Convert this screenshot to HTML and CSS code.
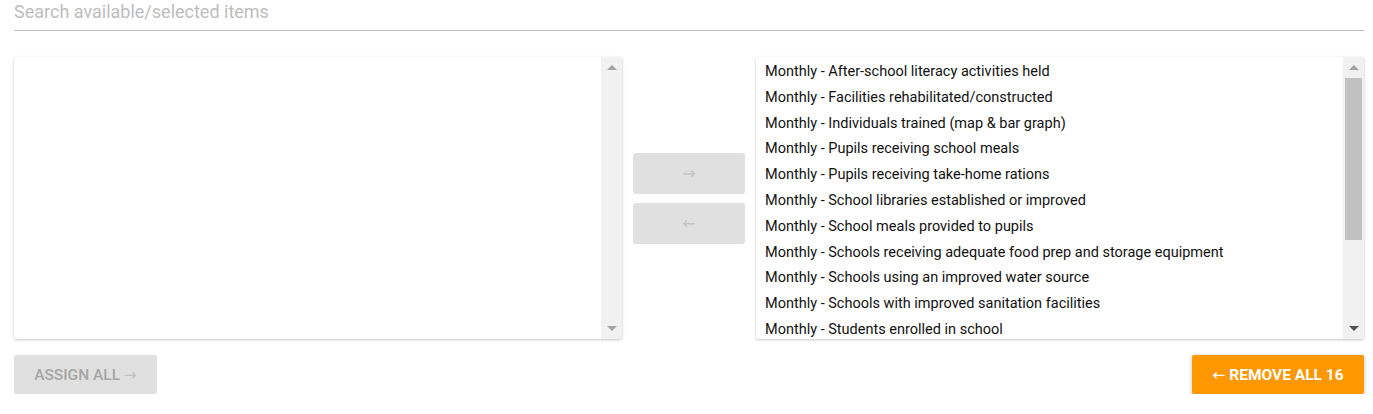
FILE: index.html
```html
<!DOCTYPE html>
<html>
<head>
<meta charset="utf-8">
<link rel="stylesheet" href="styles.css">
</head>
<body>
<div class="transfer">
  <div class="search">
    <input class="search-input" type="text" placeholder="Search available/selected items">
  </div>
  <div class="lists">
    <div class="listbox">
      <div class="items"></div>
      <div class="scrollbar">
        <div class="sb-btn"><span class="tri up"></span></div>
        <div class="sb-track"></div>
        <div class="sb-btn"><span class="tri down"></span></div>
      </div>
    </div>
    <div class="mid">
      <button class="move-btn"><span class="arrow">&rarr;</span></button>
      <button class="move-btn"><span class="arrow">&larr;</span></button>
    </div>
    <div class="listbox">
      <div class="items">
        <div class="item">Monthly - After-school literacy activities held</div>
        <div class="item">Monthly - Facilities rehabilitated/constructed</div>
        <div class="item">Monthly - Individuals trained (map &amp; bar graph)</div>
        <div class="item">Monthly - Pupils receiving school meals</div>
        <div class="item">Monthly - Pupils receiving take-home rations</div>
        <div class="item">Monthly - School libraries established or improved</div>
        <div class="item">Monthly - School meals provided to pupils</div>
        <div class="item">Monthly - Schools receiving adequate food prep and storage equipment</div>
        <div class="item">Monthly - Schools using an improved water source</div>
        <div class="item">Monthly - Schools with improved sanitation facilities</div>
        <div class="item">Monthly - Students enrolled in school</div>
      </div>
      <div class="scrollbar">
        <div class="sb-btn"><span class="tri up"></span></div>
        <div class="sb-track"><div class="sb-thumb"></div></div>
        <div class="sb-btn"><span class="tri down dark"></span></div>
      </div>
    </div>
  </div>
  <div class="actions">
    <button class="btn btn-disabled">ASSIGN ALL <span class="arrow">&rarr;</span></button>
    <button class="btn btn-primary"><span class="arrow">&larr;</span> REMOVE ALL 16</button>
  </div>
</div>
</body>
</html>
```

FILE: styles.css
```css
* { box-sizing: border-box; }
html, body { margin: 0; padding: 0; background: #fff; }
body {
  font-family: Roboto, "Liberation Sans", sans-serif;
  color: #212121;
}
.transfer {
  padding: 0 9px 0 14px;
}
.search {
  height: 31px;
  border-bottom: 1px solid #bdbdbd;
}
.search-input {
  width: 100%;
  height: 30px;
  border: none;
  outline: none;
  padding: 0 0 7px 0;
  margin: 0;
  font-family: Roboto, "Liberation Sans", sans-serif;
  font-size: 18px;
  color: #212121;
  background: transparent;
}
.search-input::placeholder { color: #bdbdbd; }
.lists {
  margin-top: 26px;
  display: flex;
  align-items: center;
  height: 282px;
}
.listbox {
  flex: 1 1 0;
  height: 282px;
  display: flex;
  background: #fff;
  box-shadow: 0 1px 3px rgba(0,0,0,0.22), 0 0 1px rgba(0,0,0,0.08);
  border-radius: 2px;
  overflow: hidden;
}
.items {
  flex: 1 1 auto;
  overflow: hidden;
  padding: 2px 0 0 0;
}
.item {
  height: 25.8px;
  line-height: 25.8px;
  padding: 0 9px;
  font-size: 14.5px;
  white-space: nowrap;
  color: #111;
}
.scrollbar {
  width: 21px;
  flex: 0 0 21px;
  background: #f1f1f1;
  display: flex;
  flex-direction: column;
}
.sb-btn {
  height: 21px;
  display: flex;
  align-items: center;
  justify-content: center;
}
.sb-track {
  flex: 1 1 auto;
  padding: 0 2px;
}
.sb-thumb {
  height: 162px;
  background: #c1c1c1;
}
.tri {
  width: 0;
  height: 0;
  border-left: 5px solid transparent;
  border-right: 5px solid transparent;
}
.tri.up { border-bottom: 5px solid #a3a3a3; }
.tri.down { border-top: 5px solid #a3a3a3; }
.tri.down.dark { border-top-color: #505050; }
.mid {
  flex: 0 0 134px;
  display: flex;
  flex-direction: column;
  align-items: center;
  gap: 9px;
}
.arrow {
  font-family: "DejaVu Sans", sans-serif;
  font-weight: normal;
}
.move-btn {
  width: 112px;
  height: 41px;
  border: none;
  border-radius: 3px;
  background: #e0e0e0;
  color: #c4c4c4;
  font-family: Roboto, "Liberation Sans", sans-serif;
  font-size: 16px;
  padding: 0;
}
.actions {
  margin-top: 16px;
  display: flex;
  justify-content: space-between;
}
.btn {
  height: 39px;
  border: none;
  border-radius: 2px;
  font-family: Roboto, "Liberation Sans", sans-serif;
  font-size: 15.5px;
  font-weight: 500;
  padding: 0 12px;
  letter-spacing: 0;
  white-space: nowrap;
}
.btn-disabled {
  width: 143px;
  background: #e0e0e0;
  color: #a6a6a6;
}
.btn-disabled .arrow { color: #c4c4c4; }
.btn-primary {
  width: 172px;
  background: #ff9800;
  color: #fff;
  font-weight: 700;
  box-shadow: 0 1px 4px rgba(0,0,0,0.25);
}
```
